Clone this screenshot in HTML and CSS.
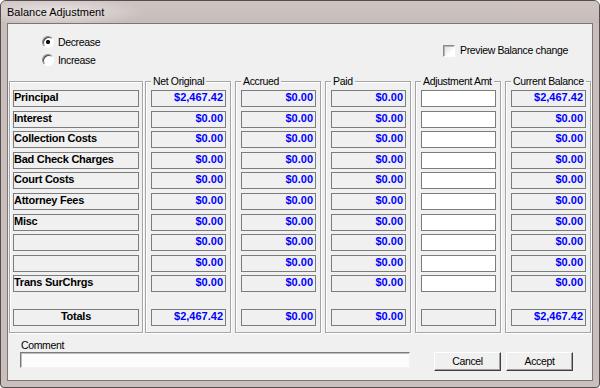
FILE: index.html
```html
<!DOCTYPE html>
<html>
<head>
<meta charset="utf-8">
<link rel="stylesheet" href="styles.css">
</head>
<body>
<div class="window">
  <div class="titlebar"><span class="title">Balance Adjustment</span></div>
  <div class="client">
    <div class="top">
      <div class="radios">
        <div class="radio-row"><span class="rb checked"></span><span class="ui">Decrease</span></div>
        <div class="radio-row"><span class="rb"></span><span class="ui">Increase</span></div>
      </div>
      <div class="check"><span class="cb"></span><span class="ui">Preview Balance change</span></div>
    </div>
    <div class="groups">
      <div class="group labels">
        <div class="cell lbl">Principal</div>
        <div class="cell lbl">Interest</div>
        <div class="cell lbl">Collection Costs</div>
        <div class="cell lbl">Bad Check Charges</div>
        <div class="cell lbl">Court Costs</div>
        <div class="cell lbl">Attorney Fees</div>
        <div class="cell lbl">Misc</div>
        <div class="cell lbl"></div>
        <div class="cell lbl"></div>
        <div class="cell lbl">Trans SurChrgs</div>
        <div class="cell lbl total center">Totals</div>
      </div>
      <div class="group">
        <span class="legend ui">Net Original</span>
        <div class="cell val">$2,467.42</div>
        <div class="cell val">$0.00</div>
        <div class="cell val">$0.00</div>
        <div class="cell val">$0.00</div>
        <div class="cell val">$0.00</div>
        <div class="cell val">$0.00</div>
        <div class="cell val">$0.00</div>
        <div class="cell val">$0.00</div>
        <div class="cell val">$0.00</div>
        <div class="cell val">$0.00</div>
        <div class="cell val total">$2,467.42</div>
      </div>
      <div class="group">
        <span class="legend ui">Accrued</span>
        <div class="cell val">$0.00</div>
        <div class="cell val">$0.00</div>
        <div class="cell val">$0.00</div>
        <div class="cell val">$0.00</div>
        <div class="cell val">$0.00</div>
        <div class="cell val">$0.00</div>
        <div class="cell val">$0.00</div>
        <div class="cell val">$0.00</div>
        <div class="cell val">$0.00</div>
        <div class="cell val">$0.00</div>
        <div class="cell val total">$0.00</div>
      </div>
      <div class="group">
        <span class="legend ui">Paid</span>
        <div class="cell val">$0.00</div>
        <div class="cell val">$0.00</div>
        <div class="cell val">$0.00</div>
        <div class="cell val">$0.00</div>
        <div class="cell val">$0.00</div>
        <div class="cell val">$0.00</div>
        <div class="cell val">$0.00</div>
        <div class="cell val">$0.00</div>
        <div class="cell val">$0.00</div>
        <div class="cell val">$0.00</div>
        <div class="cell val total">$0.00</div>
      </div>
      <div class="group">
        <span class="legend ui">Adjustment Amt</span>
        <div class="cell input"></div>
        <div class="cell input"></div>
        <div class="cell input"></div>
        <div class="cell input"></div>
        <div class="cell input"></div>
        <div class="cell input"></div>
        <div class="cell input"></div>
        <div class="cell input"></div>
        <div class="cell input"></div>
        <div class="cell input"></div>
        <div class="cell val total"></div>
      </div>
      <div class="group last">
        <span class="legend ui">Current Balance</span>
        <div class="cell val">$2,467.42</div>
        <div class="cell val">$0.00</div>
        <div class="cell val">$0.00</div>
        <div class="cell val">$0.00</div>
        <div class="cell val">$0.00</div>
        <div class="cell val">$0.00</div>
        <div class="cell val">$0.00</div>
        <div class="cell val">$0.00</div>
        <div class="cell val">$0.00</div>
        <div class="cell val">$0.00</div>
        <div class="cell val total">$2,467.42</div>
      </div>
    </div>
    <div class="bottom">
      <div class="comment">
        <div class="clabel ui">Comment</div>
        <div class="cinput"></div>
      </div>
      <div class="btn cancel ui">Cancel</div>
      <div class="btn accept ui">Accept</div>
    </div>
  </div>
</div>
</body>
</html>
```
FILE: styles.css
```css
* { box-sizing: border-box; }
html, body { margin: 0; padding: 0; }
body {
  width: 600px;
  height: 388px;
  overflow: hidden;
  background: #ffffff;
  font-family: "Liberation Sans", Arial, sans-serif;
  color: #000;
}
.window {
  width: 600px;
  height: 388px;
  background: #c9bfbd;
  border: 1px solid #564d4c;
  border-radius: 6px 6px 4px 4px;
  display: flex;
  flex-direction: column;
}
.titlebar {
  height: 22px;
  padding-left: 6px;
  display: flex;
  align-items: center;
  border-radius: 5px 5px 0 0;
  background:
    radial-gradient(ellipse 90px 14px at 55px 11px, rgba(236,232,231,0.9), rgba(236,232,231,0) 100%),
    linear-gradient(#cec5c3, #c7bcba);
}
.title { font-size: 11px; line-height: 13px; }
.client {
  margin-left: 6px;
  width: 586px;
  height: 358px;
  background: #f0f0f0;
  border: 1px solid #7d7474;
  display: flex;
  flex-direction: column;
}
.ui { font-size: 10.5px; letter-spacing: -0.35px; line-height: 13px; }
.top { height: 57px; display: flex; }
.radios { margin-left: 34px; width: 401px; padding-top: 9px; }
.radio-row { height: 18px; display: flex; align-items: center; }
.rb {
  width: 12px; height: 12px;
  border-radius: 50%;
  border: 1px solid;
  border-color: #8a8a8a #ffffff #ffffff #8a8a8a;
  background: #ffffff;
  box-shadow: inset 1px 1px 0 #4a4a4a;
  margin-right: 4px;
  flex: none;
}
.rb.checked {
  background: radial-gradient(circle at 50% 50%, #111 0, #111 1.8px, #ffffff 2.4px);
}
.check { margin-top: 20px; height: 13px; display: flex; align-items: center; }
.cb {
  width: 12px; height: 12px;
  border: 1px solid;
  border-color: #8a8a8a #ffffff #ffffff #8a8a8a;
  background: linear-gradient(135deg, #dcdcdc, #ffffff 70%);
  box-shadow: inset 1px 1px 0 #b5b5b5;
  margin-right: 5px;
  flex: none;
}
.groups { display: flex; height: 252px; margin-left: 1px; }
.group {
  position: relative;
  width: 86px;
  margin-right: 4px;
  padding: 8px 0 0 5px;
  border: 1px solid #a5a5a5;
  box-shadow: inset 1px 1px 0 #ffffff, 1px 1px 0 #ffffff;
}
.group.labels { width: 134px; margin-right: 2px; padding-left: 3px; }
.group.last { margin-right: 0; }
.legend {
  position: absolute;
  top: -7.5px;
  left: 5px;
  padding: 0 2px;
  background: #f0f0f0;
  white-space: nowrap;
}
.cell {
  height: 17px;
  width: 75px;
  margin-bottom: 3.6px;
  border: 1px solid #7c7c7c;
  background: #f0f0f0;
  font-size: 11px;
  line-height: 13px;
  font-weight: bold;
  white-space: nowrap;
  overflow: hidden;
}
.cell.lbl { width: 126px; padding-left: 0; letter-spacing: -0.25px; color: #000; }
.cell.center { text-align: center; }
.cell.val { color: #0000ff; text-align: right; padding-right: 2px; }
.cell.input { background: #ffffff; }
.cell.total { margin-top: 16.6px; }
.bottom { display: flex; margin-top: 6px; }
.comment { margin-left: 12px; width: 390px; }
.clabel { height: 13px; padding-left: 1px; }
.cinput {
  height: 16px;
  border: 1px solid;
  border-color: #7a7a7a #f4f4f4 #f4f4f4 #7a7a7a;
  box-shadow: inset 1px 1px 0 #bdbdbd;
  background: #fcfcfc;
}
.btn {
  margin-top: 13px;
  width: 67px;
  height: 19px;
  display: flex;
  align-items: center;
  justify-content: center;
  background: #f0f0f0;
  border: 1px solid;
  border-color: #ffffff #404040 #404040 #ffffff;
  box-shadow: inset -1px -1px 0 #a0a0a0;
}
.cancel { margin-left: 24px; }
.accept { margin-left: 5px; }
```
